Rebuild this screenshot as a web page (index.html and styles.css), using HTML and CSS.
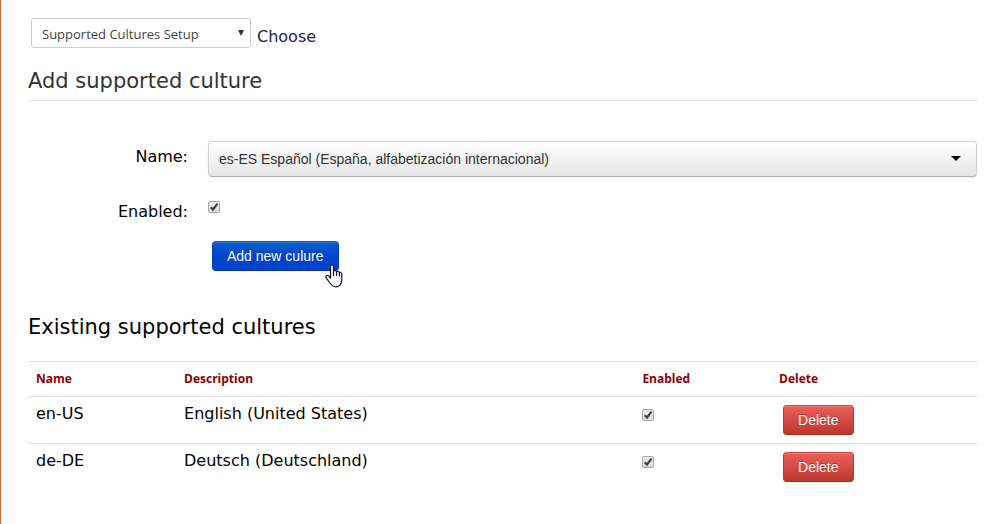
FILE: index.html
```
<!DOCTYPE html>
<html lang="en">

<head>
    <meta charset="UTF-8">
    <meta name="viewport" content="width=device-width, initial-scale=1.0">
    <title>Supported Cultures Setup</title>
    <link rel="stylesheet" href="styles.css">
</head>

<body>
    <main class="content">
        <div class="chooser">
            <select id="section" class="section-select">
                <option>Supported Cultures Setup</option>
            </select>
            <label for="section">Choose</label>
        </div>

        <form class="culture-form">
            <h2 class="legend">Add supported culture</h2>
            <div class="form-row">
                <label class="form-label" for="culture">Name:</label>
                <select id="culture" class="culture-select">
                    <option>es-ES Español (España, alfabetización internacional)</option>
                </select>
            </div>
            <div class="form-row">
                <label class="form-label" for="enabled">Enabled:</label>
                <input id="enabled" class="check" type="checkbox" checked>
            </div>
            <div class="form-actions">
                <button class="btn btn-primary" type="button">Add new culure
                    <svg class="pointer" width="18" height="24" viewBox="0 0 18 24" aria-hidden="true">
                        <path d="M5.5 14V2.5C5.5 .2 8.5 .2 8.5 2.5V7C9.5 6 11.3 6.3 11.5 7.8C12.5 7 14.2 7.3 14.4 8.8C15.6 8 16.8 8.8 16.8 10V15C16.8 20 14.6 22.8 10.8 22.8C7.8 22.8 6.4 21.2 5 19L1.2 14.2C0 12 2.2 10.6 3.8 12.2Z" fill="#fff" stroke="#15152b" stroke-width="1.2" stroke-linejoin="round"/>
                        <path d="M8.5 6.5V12M11.5 7.8V12M14.4 8.8V12.5" fill="none" stroke="#15152b" stroke-width="1.2"/>
                    </svg>
                </button>
            </div>
        </form>

        <h2 class="table-title">Existing supported cultures</h2>
        <table class="cultures">
            <thead>
                <tr>
                    <th class="col-name">Name</th>
                    <th class="col-description">Description</th>
                    <th class="col-enabled">Enabled</th>
                    <th class="col-delete">Delete</th>
                </tr>
            </thead>
            <tbody>
                <tr>
                    <td>en-US</td>
                    <td>English (United States)</td>
                    <td><input class="check" type="checkbox" aria-label="en-US enabled" checked></td>
                    <td><button class="btn btn-danger" type="button">Delete</button></td>
                </tr>
                <tr>
                    <td>de-DE</td>
                    <td>Deutsch (Deutschland)</td>
                    <td><input class="check" type="checkbox" aria-label="de-DE enabled" checked></td>
                    <td><button class="btn btn-danger" type="button">Delete</button></td>
                </tr>
            </tbody>
        </table>
    </main>
</body>

</html>
```
FILE: styles.css
```
* {
    box-sizing: border-box;
}

body {
    margin: 0;
    min-height: 100vh;
    border-left: 1px solid #c87137;
    background: #fff;
    color: #000;
    font-family: Verdana, "DejaVu Sans", sans-serif;
    font-size: 16px;
    line-height: 20px;
}

.content {
    padding: 18px 19px 18px 27px;
}

.chooser {
    display: flex;
    align-items: center;
    gap: 6px;
    padding-left: 3px;
    color: #22264f;
}

.chooser label {
    padding-top: 8px;
}

select {
    appearance: none;
    background-repeat: no-repeat;
}

.section-select {
    width: 220px;
    height: 30px;
    padding: 1px 24px 0 10px;
    border: 1px solid #ccc;
    border-radius: 3px;
    background-color: #fff;
    background-image: url("data:image/svg+xml,%3Csvg xmlns='http://www.w3.org/2000/svg' width='6' height='6'%3E%3Cpath d='M0 0H6L3 6Z' fill='%23333'/%3E%3C/svg%3E");
    background-position: right 6px top 11px;
    color: #444;
    font: 13px "Open Sans", sans-serif;
}

h2 {
    margin: 0;
    padding-top: 2px;
    font-size: 21px;
    font-weight: normal;
    line-height: 38px;
}

.legend {
    margin: 12px 0 40px;
    border-bottom: 1px solid #e5e5e5;
    color: #333;
}

.form-row {
    display: flex;
    margin-bottom: 19px;
}

.form-label {
    flex: 0 0 160px;
    margin-right: 20px;
    padding-top: 6px;
    text-align: right;
}

.culture-select {
    flex: 1;
    min-width: 0;
    height: 36px;
    padding: 0 36px 0 10px;
    border: 1px solid #ccc;
    border-color: #d9d9d9 #d0d0d0 #b3b3b3;
    border-radius: 4px;
    background-color: #f5f5f5;
    background-image: url("data:image/svg+xml,%3Csvg xmlns='http://www.w3.org/2000/svg' width='10' height='5'%3E%3Cpath d='M0 0H10L5 5Z'/%3E%3C/svg%3E"), linear-gradient(#fff, #e6e6e6);
    background-position: right 15px top 14px, 0 0;
    box-shadow: 0 1px 2px rgba(0, 0, 0, 0.05);
    color: #333;
    font: 14px Arial, "Liberation Sans", sans-serif;
}

.check {
    appearance: none;
    display: block;
    width: 12px;
    height: 12px;
    margin: 4px 0 0;
    border: 1px solid #a6a6a6;
    border-radius: 2px;
    background: linear-gradient(#eee, #dedede);
}

.form-row .check {
    margin-top: 5px;
}

.check:checked {
    background: url("data:image/svg+xml,%3Csvg xmlns='http://www.w3.org/2000/svg' width='10' height='10'%3E%3Cpath d='M1.7 5.2L4 7.5L8.5 1.7' fill='none' stroke='%23404040' stroke-width='2.2'/%3E%3C/svg%3E"), linear-gradient(#eee, #dedede);
}

.form-actions {
    padding-left: 180px;
}

.btn {
    position: relative;
    height: 30px;
    margin: 0 4px;
    padding: 0 14px;
    border: 1px solid;
    border-radius: 4px;
    box-shadow: inset 0 1px 0 rgba(255, 255, 255, 0.2), 0 1px 2px rgba(0, 0, 0, 0.05);
    color: #fff;
    font: 14px Arial, "Liberation Sans", sans-serif;
    text-shadow: 0 -1px 0 rgba(0, 0, 0, 0.25);
    vertical-align: top;
    white-space: nowrap;
}

.btn-primary {
    border-color: #0050bb #0044bb #003399;
    background: linear-gradient(#0060cc, #0044cc 50%);
}

.btn-danger {
    border-color: #c9463f #bd362f #a52f29;
    background: linear-gradient(#ee5f5b, #bd362f);
}

.pointer {
    position: absolute;
    right: -5px;
    bottom: -18px;
}

.table-title {
    margin-top: 35px;
}

.cultures {
    width: 100%;
    margin-top: 15px;
    border-collapse: collapse;
    table-layout: fixed;
}

.cultures th,
.cultures td {
    padding: 8px;
    border-top: 1px solid #ddd;
    line-height: 18px;
    text-align: left;
    vertical-align: top;
}

.cultures th {
    color: #8b0000;
    font: bold 12px/18px "Open Sans", sans-serif;
}

.col-name {
    width: 15.6%;
}

.col-description {
    width: 48.3%;
}

.col-enabled {
    width: 14.4%;
}
```
